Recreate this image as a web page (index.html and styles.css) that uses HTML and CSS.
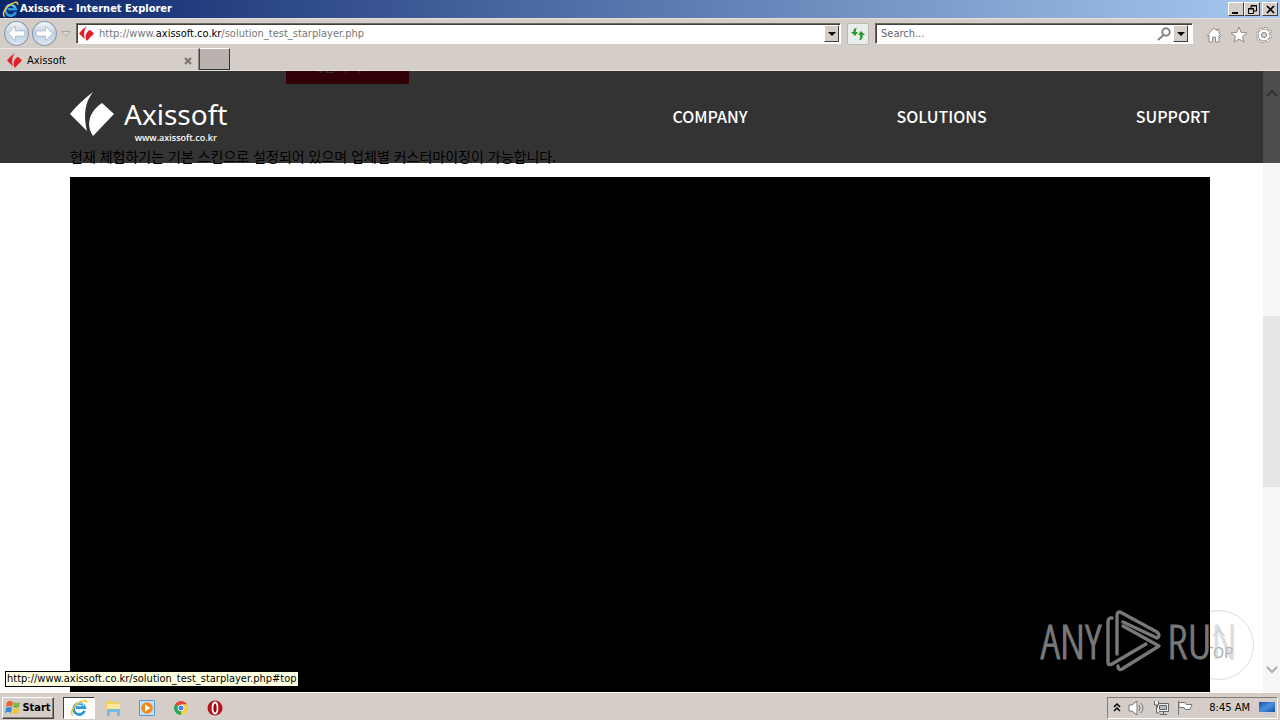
FILE: index.html
```html
<!DOCTYPE html>
<html lang="ko">
<head>
<meta charset="utf-8">
<title>Axissoft - Internet Explorer</title>
<link rel="stylesheet" href="styles.css">
</head>
<body>
<svg width="0" height="0" class="defs">
  <defs>
    <linearGradient id="orb" x1="0" y1="0" x2="0" y2="1"><stop offset="0" stop-color="#f4f7fa"/><stop offset=".5" stop-color="#c3d0e0"/><stop offset="1" stop-color="#dbe9f3"/></linearGradient>
    <linearGradient id="screen" x1="0" y1="0" x2="1" y2="1"><stop offset="0" stop-color="#174fa8"/><stop offset=".5" stop-color="#4a90dc"/><stop offset="1" stop-color="#1450ac"/></linearGradient>
    <symbol id="ie" viewBox="0 0 18 18">
      <path d="M14.5 11.8A5.6 5.6 0 1 1 14.7 8.7H6" fill="none" stroke="#2b9be0" stroke-width="2.8"/>
      <path d="M14 7a5.2 5.2 0 0 0-9-1.4" fill="none" stroke="#8cdcfa" stroke-width="1.2"/>
      <path d="M3 16.5C-1 14 4 6 10 3c4-2 7-2.500 6.500 1" fill="none" stroke="#f4c430" stroke-width="1.6"/>
    </symbol>
    <symbol id="axis" viewBox="0 0 44 44">
      <path d="M23 0C15 10 13 23 17 39L0 22C6 14 14 7 23 0Z"/>
      <path d="M32 11L44 22 23 44C15 32 20 19 32 11Z"/>
    </symbol>
  </defs>
</svg>
<div class="window">
  <header class="titlebar">
    <svg class="ie-title"><use href="#ie"/></svg>
    <h1 class="window-title">Axissoft - Internet Explorer</h1>
    <div class="window-buttons">
      <button class="win-btn" aria-label="Minimize"><svg width="9" height="9"><path d="M0 7h6v2H0z"/></svg></button>
      <button class="win-btn" aria-label="Restore"><svg width="9" height="9" fill="none" stroke="#000"><path d="M3 3V.5h5.500V6H6M3 1h6M.5 3.500h5v5h-5zM0 4h6"/></svg></button>
      <button class="win-btn close" aria-label="Close"><svg width="9" height="9" stroke="#000" stroke-width="1.700"><path d="M1 1l7 7M8 1L1 8"/></svg></button>
    </div>
  </header>

  <div class="toolbar">
    <div class="nav-buttons">
      <button class="orb" aria-label="Back"><svg viewBox="0 0 26 26"><circle cx="13" cy="13" r="11.500" fill="url(#orb)" stroke="#8796aa"/><path d="M5 13l7-7v4.500h9v5h-9V20z" fill="#fff" stroke="#a8b8ca" stroke-width=".8"/></svg></button>
      <button class="orb" aria-label="Forward"><svg viewBox="0 0 26 26"><circle cx="13" cy="13" r="11.500" fill="url(#orb)" stroke="#8796aa"/><path d="M21 13l-7-7v4.500H5v5h9V20z" fill="#fff" stroke="#a8b8ca" stroke-width=".8"/></svg></button>
      <button class="history" aria-label="Recent pages"><svg width="10" height="6"><path d="M1 .5h8L5 5z" fill="#e2dfda" stroke="#aaa6a0"/></svg></button>
    </div>
    <div class="field address">
      <svg class="favicon"><use href="#axis"/></svg>
      <div class="url" role="textbox" aria-label="Address"><span>http://www.</span><b>axissoft.co.kr</b><span>/solution_test_starplayer.php</span></div>
      <button class="drop" aria-label="Show address list"><svg width="8" height="4"><path d="M0 0h8L4 4z"/></svg></button>
    </div>
    <button class="refresh" aria-label="Refresh"><svg width="16" height="14" viewBox="0 0 16 14"><path d="M7 1C4 1 3 3 3.500 5H1l4 4 3-4H6C5.500 3 6 2 7 1Z" fill="#279c2c"/><path d="M9 13c3 0 4-2 3.500-5H15l-4-4-3 4h2c.5 2 0 4-1 5Z" fill="#279c2c"/></svg></button>
    <div class="field search">
      <input class="search-input" aria-label="Search" placeholder="Search...">
      <svg class="lens" width="14" height="14" fill="none" stroke="#858585" stroke-width="2"><circle cx="9" cy="5" r="3.700"/><path d="M6.500 8L1 13"/></svg>
      <button class="drop" aria-label="Search providers"><svg width="8" height="4"><path d="M0 0h8L4 4z"/></svg></button>
    </div>
    <div class="tools">
      <button aria-label="Home"><svg viewBox="0 0 18 18"><path d="M2 9.500l7-7.500 3 3V3h2v4l2.500 2.500-1 1L14 9v7h-3.500v-5h-3v5H4V9l-1 1.500z" fill="#fff" stroke="#8f8c89"/></svg></button>
      <button aria-label="Favorites"><svg viewBox="0 0 18 18"><path d="M9 1l2.200 5.400 5.800.4-4.500 3.700 1.500 5.700L9 13l-5 3.200 1.500-5.700L1 6.800l5.800-.4z" fill="#fff" stroke="#8f8c89"/></svg></button>
      <button aria-label="Tools"><svg viewBox="0 0 18 18"><circle cx="9" cy="9" r="6.800" fill="none" stroke="#8f8c89" stroke-width="3" stroke-dasharray="2.900 2.440"/><circle cx="9" cy="9" r="6" fill="#fff" stroke="#8f8c89"/><circle cx="9" cy="9" r="6.800" fill="none" stroke="#fff" stroke-width="1.600" stroke-dasharray="2 3.340" stroke-dashoffset="-.4"/><circle cx="9" cy="9" r="2.600" fill="#d5cec8" stroke="#8f8c89"/></svg></button>
    </div>
  </div>

  <div class="tabs">
    <div class="tab">
      <svg class="favicon"><use href="#axis"/></svg>
      <span class="tab-name">Axissoft</span>
      <button class="tab-close" aria-label="Close tab"><svg width="8" height="8" stroke="#77736f" stroke-width="2"><path d="M1 1l6 6M7 1L1 7"/></svg></button>
    </div>
    <button class="new-tab" aria-label="New tab"></button>
  </div>

  <div class="viewport">
    <main class="page">
      <a class="trial" href="#trial">체험하기</a>
      <p class="note">현재 체험하기는 기본 스킨으로 설정되어 있으며 업체별 커스터마이징이 가능합니다.</p>
      <div class="player"></div>
    </main>
    <div class="scrollbar">
      <svg class="arrow" viewBox="0 0 12 8"><path d="M1 7l5-5 5 5"/></svg>
      <div class="track"><div class="thumb"></div></div>
      <svg class="arrow" viewBox="0 0 12 8"><path d="M1 1l5 5 5-5"/></svg>
    </div>
    <div class="site-header">
      <a class="logo" href="#home">
        <svg class="logo-mark"><use href="#axis"/></svg>
        <span class="logo-text"><span class="logo-name">Axissoft</span><span class="logo-url">www.axissoft.co.kr</span></span>
      </a>
      <nav class="menu"><a href="#company">COMPANY</a><a href="#solutions">SOLUTIONS</a><a href="#support">SUPPORT</a></nav>
      <div class="header-edge"><svg class="arrow dark" viewBox="0 0 12 8"><path d="M1 7l5-5 5 5"/></svg></div>
    </div>
    <a class="top-link" href="#top"><svg width="14" height="9" fill="none" stroke="#bbb"><path d="M1 8l6-6 6 6"/></svg><span>TOP</span></a>
    <div class="watermark">
      <span>ANY</span>
      <svg viewBox="0 0 56 62" fill="none" stroke="currentColor" stroke-width="3.400" stroke-linejoin="round" stroke-linecap="round">
        <path d="M6 8Q2 7 2 13V52Q2 56 6 54L40 34"/>
        <path d="M11 44V6Q11 0 16 3L51 22Q55 26 51 28L17 12"/>
        <path d="M17 16L53 36 16 59Q12 61 12 56"/>
      </svg>
      <span>RUN</span>
    </div>
    <div class="status">http://www.axissoft.co.kr/solution_test_starplayer.php#top</div>
  </div>

  <footer class="taskbar">
    <button class="start"><svg width="16" height="16" viewBox="0 0 16 16"><path d="M2 2q3-2 6 0L7 7Q4 5 1 7z" fill="#e9622c"/><path d="M9 2q3 2 6 0l-1 5q-3 2-6 0z" fill="#77b843"/><path d="M1 8q3-2 6 0l-1 5q-3-2-6 0z" fill="#398bd5"/><path d="M8 8q3 2 6 0l-1 5q-3 2-6 0z" fill="#f3c331"/></svg>Start</button>
    <div class="apps">
      <button class="app active" aria-label="Internet Explorer"><svg><use href="#ie"/></svg></button>
      <button class="app" aria-label="Explorer"><svg viewBox="0 0 18 18"><path d="M2 3l5-2 2 2h6v8H2z" fill="#f0cf62"/><path d="M3 5h13v8H3z" fill="#fae799"/><path d="M3 17v-6q0-1 1-1h11q1 0 1 1v6h-3v-4H6v4z" fill="#76bce2"/></svg></button>
      <button class="app" aria-label="Media Player"><svg viewBox="0 0 18 18"><path d="M1.500 1.500h15v15h-15z" fill="#c4e0f5" stroke="#579bd1"/><circle cx="9" cy="9" r="5.800" fill="#f08a1d"/><path d="M7 5.500L12.500 9 7 12.500z" fill="#fff"/></svg></button>
      <button class="app" aria-label="Chrome"><svg viewBox="0 0 18 18"><path d="M9 9L3 5.500A7 7 0 0 1 15.100 5.500H9Z" fill="#e24432"/><path d="M9 9L3 5.500A7 7 0 0 0 9 16l3-5Z" fill="#2fa454"/><path d="M9 9L9 16A7 7 0 0 0 15.100 5.500H9Z" fill="#f9cf3d"/><circle cx="9" cy="9" r="3.300" fill="#fff"/><circle cx="9" cy="9" r="2.500" fill="#4286ec"/></svg></button>
      <button class="app" aria-label="Opera"><svg viewBox="0 0 18 18"><circle cx="9" cy="9" r="7.500" fill="#b5121b"/><ellipse cx="9" cy="9" rx="2.500" ry="5.500" fill="#a00" stroke="#fff" stroke-width="1.800"/></svg></button>
    </div>
    <div class="tray">
      <svg width="8" height="10" fill="none" stroke="#000" stroke-width="1.500"><path d="M1 4l3-3 3 3M1 8l3-3 3 3"/></svg>
      <svg width="18" height="16" fill="#fff" stroke="#777"><path d="M1 5h3l5-4v14l-5-4H1z"/><path d="M11 5q2 3 0 6M13 3q4 5 0 10" fill="none"/></svg>
      <svg width="17" height="16" fill="#eee" stroke="#666"><path d="M4.500 3.500h11v8h-11z"/><path d="M6.500 5.500h7v4h-7z" fill="#bbb"/><path d="M7 14.500h7M10.500 12v2M1.500 1v4h4V1M3.500 5v8h3"/></svg>
      <svg width="17" height="16" fill="#fff" stroke="#777"><path d="M1.500 1v14M2 2.500h6l1 2h6l-2 5H8l-1-2H2z"/></svg>
      <time class="clock">8:45 AM</time>
      <svg width="16" height="14"><path d="M0 1h16v10H0z" fill="url(#screen)"/><path d="M5 12h7v2H5z" fill="#b8c6d5"/></svg>
    </div>
  </footer>
</div>
</body>
</html>
```
FILE: styles.css
```css
* { box-sizing: border-box; }
body { margin: 0; font: 11px/14px Tahoma, "DejaVu Sans Condensed", sans-serif; color: #000; }
button { font: inherit; padding: 0; border: 0; background: none; color: inherit; display: flex; align-items: center; justify-content: center; }
a { color: inherit; text-decoration: none; }
svg { flex: none; display: block; }
.defs { position: absolute; }
.window { height: 100vh; display: flex; flex-direction: column; background: #d5cec8; }

.titlebar { height: 18px; flex: none; display: flex; align-items: center; gap: 1px; padding: 0 2px; background: linear-gradient(90deg, #0a246a, #a6caf0); }
.ie-title { width: 17px; height: 17px; }
.window-title { margin: 0; flex: 1; font-size: 11px; line-height: 14px; color: #fff; }
.window-buttons { display: flex; }
.win-btn { width: 16px; height: 14px; background: #d5cec8; border: 1px solid; border-color: #fff #404040 #404040 #fff; }
.close { margin-left: 2px; }

.toolbar { height: 30px; flex: none; display: flex; align-items: center; padding: 0 7px 0 2px; border-top: 1px solid #e4dfda; }
.nav-buttons { display: flex; align-items: center; width: 74px; }
.orb { width: 28px; }
.orb svg { width: 27px; height: 27px; }
.history { width: 16px; }
.field { height: 21px; display: flex; align-items: center; background: #fff; border: 1px solid; border-color: #6e6a64 #fff #fff #6e6a64; box-shadow: inset 1px 1px #444039; }
.address { flex: 1; padding: 1px 1px 1px 2px; }
.favicon { width: 15px; height: 15px; fill: #e02028; }
.url { flex: 1; padding-left: 5px; color: #777; white-space: nowrap; }
.url b { font-weight: normal; color: #000; }
.drop { width: 15px; height: 17px; background: #d5cec8; border: 1px solid; border-color: #fff #404040 #404040 #fff; }
.refresh { width: 22px; height: 22px; margin: 0 6px; background: #e9eeec; border: 1px solid #bdb8b1; border-radius: 2px; }
.search { width: 318px; padding: 1px 4px 1px 1px; }
.search-input { flex: 1; min-width: 0; border: 0; padding: 0 4px; background: none; font: inherit; outline: 0; }
.search-input::placeholder { color: #666; opacity: 1; }
.lens { margin-right: 2px; }
.tools { display: flex; gap: 7px; margin-left: 12px; padding-top: 2px; }
.tools svg { width: 18px; height: 18px; }

.tabs { height: 23px; flex: none; display: flex; border-bottom: 1px solid #e4e0d8; }
.tab { width: 199px; display: flex; align-items: center; padding: 2px 6px 0 7px; border-top: 1px solid #eee9e4; border-right: 1px solid #8c8780; }
.tab-name { flex: 1; padding-left: 5px; }
.new-tab { width: 31px; background: #b9b2ae; border: 1px solid; border-color: #fff #333 #333 #444; }

.viewport { flex: 1; min-height: 0; position: relative; display: flex; overflow: hidden; background: #fff; }
.page { flex: 1; display: flex; flex-direction: column; padding: 0 53px 0 70px; }
.trial { width: 123px; height: 40px; flex: none; margin: -27px 0 0 216px; padding: 0 24px; background: #f0001e; color: #fff; font: 14px/42px "Noto Sans CJK KR", sans-serif; }
.note { margin: 62px 0 10px; color: #000; font: 14px/21px "Noto Sans CJK KR", sans-serif; white-space: nowrap; }
.player { flex: 1; background: #000; }
.scrollbar { width: 17px; padding: 18px 0; display: flex; flex-direction: column; align-items: center; background: #f6f6f6; }
.arrow { width: 12px; height: 8px; fill: none; stroke: #aaa; stroke-width: 2; }
.track { flex: 1; align-self: stretch; display: flex; flex-direction: column; padding-top: 219px; }
.thumb { height: 171px; background: #e6e6e6; }

.site-header { position: absolute; top: 0; left: 0; right: 0; height: 92px; padding-left: 70px; display: flex; background: rgba(0, 0, 0, .8); color: #fff; }
.logo { display: flex; gap: 10px; padding-top: 21px; }
.logo-mark { width: 44px; height: 44px; fill: #fff; }
.logo-text { display: flex; flex-direction: column; }
.logo-name { font: 28px/40px "Noto Sans", sans-serif; padding-top: 2px; }
.logo-url { font: 600 9px/8px "Open Sans", sans-serif; text-align: center; }
.menu { flex: 1; display: flex; justify-content: flex-end; align-items: center; gap: 149px; padding: 0 53px 2px 0; font: 500 16px/24px "Noto Sans CJK KR", sans-serif; }
.header-edge { width: 17px; padding-top: 18px; display: flex; justify-content: center; background: #4d4d4d; }
.dark { stroke: #303030; }

.top-link { position: absolute; right: 26px; bottom: 12px; width: 70px; height: 70px; border: 1px solid #ddd; border-radius: 50%; background: #fff; color: #aaa; display: flex; flex-direction: column; align-items: center; justify-content: center; gap: 5px; font: 15px/20px "Noto Sans CJK KR", sans-serif; clip-path: inset(0 0 0 26px); }
.watermark { position: absolute; right: 43px; bottom: 20px; display: flex; align-items: center; gap: 5px; color: #c8c8c8; opacity: .6; font: 300 48px/62px "Open Sans Condensed Light", "Open Sans Condensed", sans-serif; -webkit-text-stroke: 1px #c8c8c8; }
.watermark svg { width: 56px; height: 62px; }
.status { position: absolute; left: 5px; bottom: 5px; padding: 0 1px; border: 1px solid #000; background: #ffffe1; }

.taskbar { height: 28px; flex: none; display: flex; align-items: center; padding: 2px 2px 0; border-top: 1px solid #fff; }
.start { width: 52px; height: 22px; gap: 1px; font-weight: bold; border: 1px solid; border-color: #fff #404040 #404040 #fff; box-shadow: inset -1px -1px #8a857f; }
.apps { flex: 1; display: flex; gap: 2px; padding-left: 9px; }
.app { width: 32px; height: 22px; }
.app svg { width: 18px; height: 18px; }
.active { background: #fff; border: 1px solid; border-color: #404040 #fff #fff #404040; }
.tray { height: 22px; display: flex; align-items: center; gap: 7px; padding: 0 2px 0 5px; border: 1px solid; border-color: #817c76 #fff #fff #817c76; }
.clock { padding: 0 2px 0 8px; }
```
